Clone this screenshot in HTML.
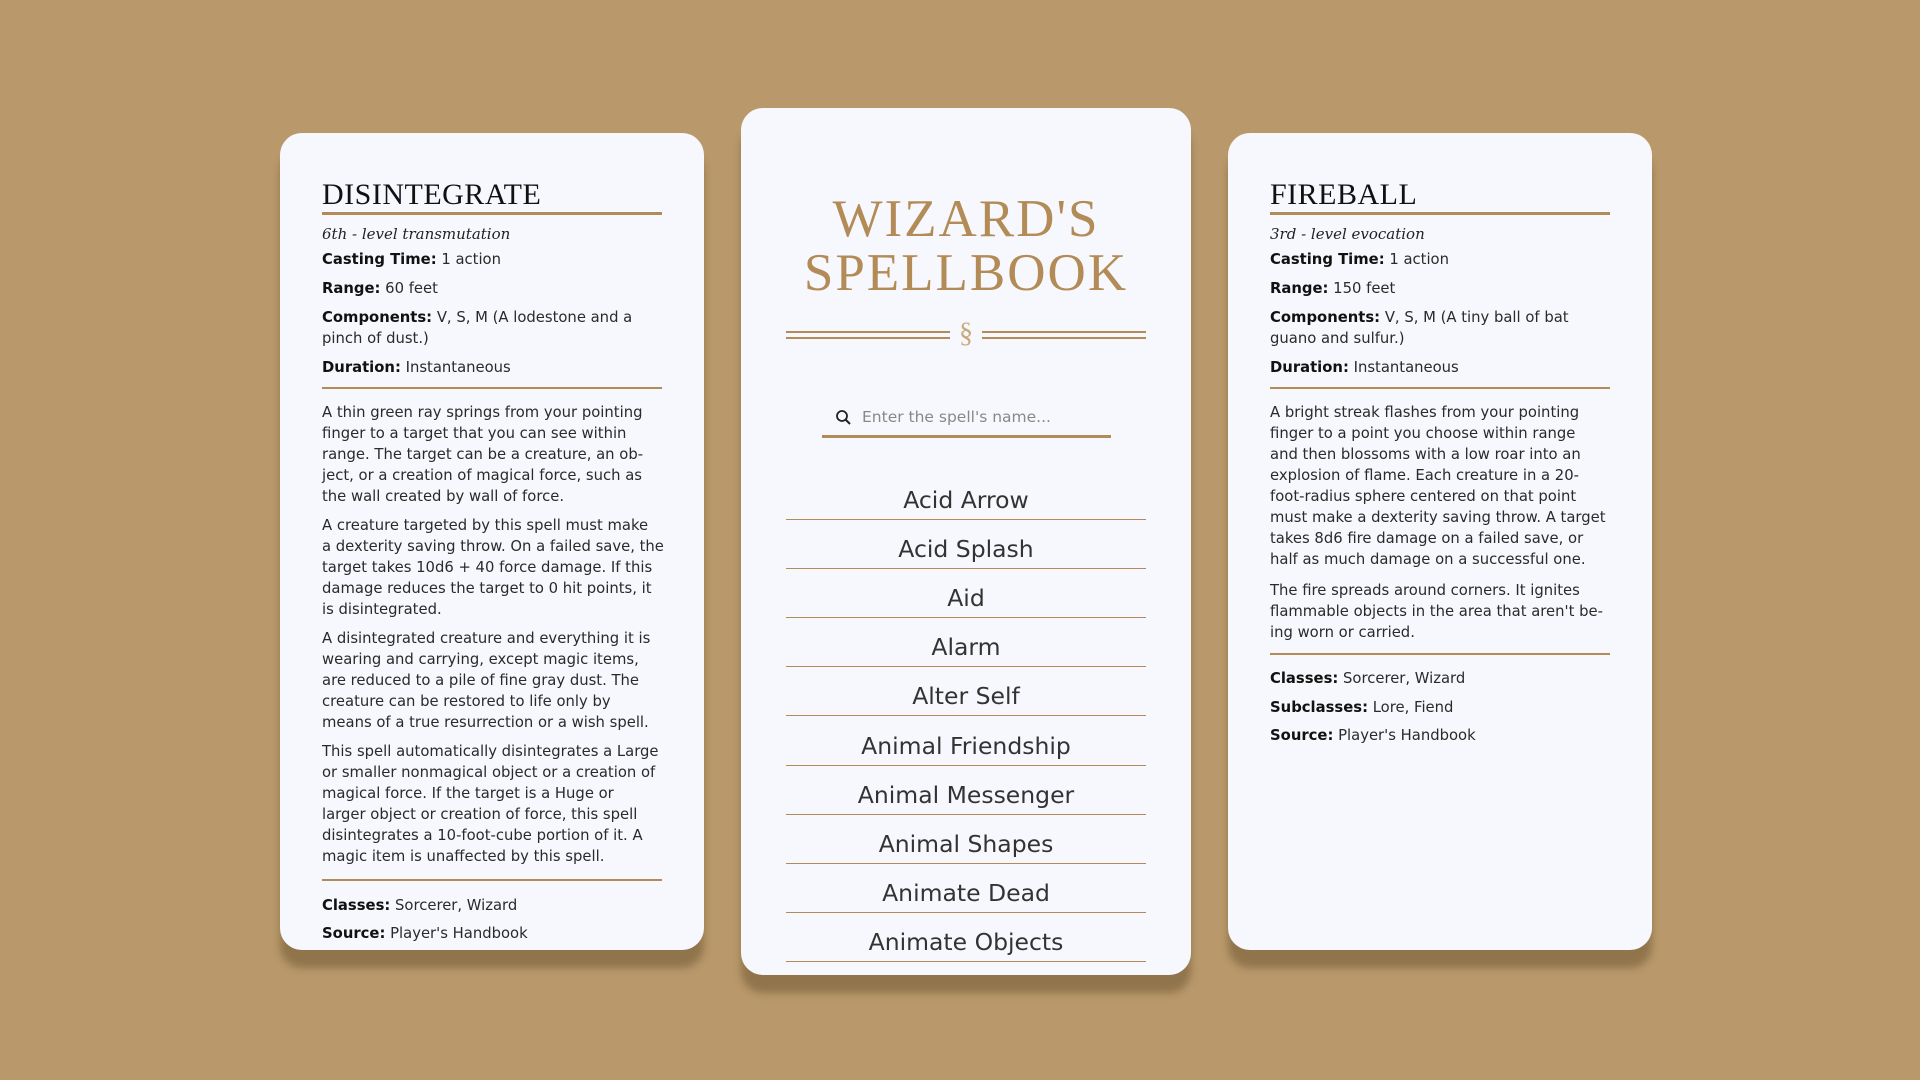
<!DOCTYPE html>
<html><head><meta charset="utf-8"><style>
body{margin:0;width:1920px;height:1080px;background:#b9996b;position:relative;overflow:hidden;font-family:"DejaVu Sans","Liberation Sans",sans-serif;color:#222;}
.card{position:absolute;background:#f7f8fd;border-radius:22px;box-shadow:0 18px 8px rgba(70,50,20,.35);}
.t{position:absolute;white-space:nowrap;font-size:14.8px;line-height:21px;color:#2a2a2a;}
.t b{color:#111;}
.h{position:absolute;font-family:"Liberation Serif",serif;font-size:30px;letter-spacing:0.5px;color:#111;line-height:34px;}
.sub{position:absolute;font-family:"DejaVu Serif","Liberation Serif",serif;font-style:italic;font-size:15px;color:#222;}
.hr{position:absolute;height:2px;background:#b38b57;}
.item{position:absolute;left:45px;width:360px;text-align:center;font-size:23.5px;color:#333;height:30px;line-height:30px;}
.line{position:absolute;left:45px;width:360px;height:1px;background:#b38b57;}
</style></head><body>

<div class="card" style="left:280px;top:133px;width:424px;height:817px;">
<div class="h" style="left:42px;top:45px;">DISINTEGRATE</div>
<div class="hr" style="left:42px;top:79px;width:340px;height:3px;"></div>
<div class="sub" style="left:42px;top:92px;">6th - level transmutation</div>
<div class="t" style="left:42px;top:116px;"><b>Casting Time:</b> 1 action</div>
<div class="t" style="left:42px;top:145px;"><b>Range:</b> 60 feet</div>
<div class="t" style="left:42px;top:174px;"><b>Components:</b> V, S, M (A lodestone and a<br>pinch of dust.)</div>
<div class="t" style="left:42px;top:224px;"><b>Duration:</b> Instantaneous</div>
<div class="hr" style="left:42px;top:254px;width:340px;"></div>
<div class="t" style="left:42px;top:269px;">A thin green ray springs from your pointing<br>finger to a target that you can see within<br>range. The target can be a creature, an ob-<br>ject, or a creation of magical force, such as<br>the wall created by wall of force.</div>
<div class="t" style="left:42px;top:382px;">A creature targeted by this spell must make<br>a dexterity saving throw. On a failed save, the<br>target takes 10d6 + 40 force damage. If this<br>damage reduces the target to 0 hit points, it<br>is disintegrated.</div>
<div class="t" style="left:42px;top:495px;">A disintegrated creature and everything it is<br>wearing and carrying, except magic items,<br>are reduced to a pile of fine gray dust. The<br>creature can be restored to life only by<br>means of a true resurrection or a wish spell.</div>
<div class="t" style="left:42px;top:608px;">This spell automatically disintegrates a Large<br>or smaller nonmagical object or a creation of<br>magical force. If the target is a Huge or<br>larger object or creation of force, this spell<br>disintegrates a 10-foot-cube portion of it. A<br>magic item is unaffected by this spell.</div>
<div class="hr" style="left:42px;top:746px;width:340px;"></div>
<div class="t" style="left:42px;top:762px;"><b>Classes:</b> Sorcerer, Wizard</div>
<div class="t" style="left:42px;top:790px;"><b>Source:</b> Player's Handbook</div>
</div>

<div class="card" style="left:741px;top:108px;width:450px;height:867px;">
<div style="position:absolute;left:0;width:450px;top:84px;text-align:center;font-family:'Liberation Serif',serif;font-size:53px;line-height:54px;letter-spacing:2px;color:#b38b57;">WIZARD'S<br>SPELLBOOK</div>
<div style="position:absolute;left:45px;top:223px;width:164px;height:2px;background:#b38b57;"></div>
<div style="position:absolute;left:45px;top:229px;width:164px;height:2px;background:#b38b57;"></div>
<div style="position:absolute;left:241px;top:223px;width:164px;height:2px;background:#b38b57;"></div>
<div style="position:absolute;left:241px;top:229px;width:164px;height:2px;background:#b38b57;"></div>
<div style="position:absolute;left:205px;width:40px;top:210px;text-align:center;font-family:'Liberation Serif',serif;font-size:28px;color:#c9a87a;">§</div>
<svg style="position:absolute;left:94px;top:301px" width="18" height="18" viewBox="0 0 18 18"><circle cx="7" cy="7" r="5" fill="none" stroke="#222" stroke-width="1.8"/><path d="M10.5 10.5 L15 15" stroke="#222" stroke-width="2"/></svg>
<div style="position:absolute;left:121px;top:300px;font-size:15.5px;color:#888;">Enter the spell's name...</div>
<div style="position:absolute;left:81px;top:327px;width:289px;height:3px;background:#b38b57;"></div>
<div class="item" style="top:377px;">Acid Arrow</div><div class="line" style="top:411px;"></div>
<div class="item" style="top:426px;">Acid Splash</div><div class="line" style="top:460px;"></div>
<div class="item" style="top:475px;">Aid</div><div class="line" style="top:509px;"></div>
<div class="item" style="top:524px;">Alarm</div><div class="line" style="top:558px;"></div>
<div class="item" style="top:573px;">Alter Self</div><div class="line" style="top:607px;"></div>
<div class="item" style="top:623px;">Animal Friendship</div><div class="line" style="top:657px;"></div>
<div class="item" style="top:672px;">Animal Messenger</div><div class="line" style="top:706px;"></div>
<div class="item" style="top:721px;">Animal Shapes</div><div class="line" style="top:755px;"></div>
<div class="item" style="top:770px;">Animate Dead</div><div class="line" style="top:804px;"></div>
<div class="item" style="top:819px;">Animate Objects</div><div class="line" style="top:853px;"></div>
</div>

<div class="card" style="left:1228px;top:133px;width:424px;height:817px;">
<div class="h" style="left:42px;top:45px;">FIREBALL</div>
<div class="hr" style="left:42px;top:79px;width:340px;height:3px;"></div>
<div class="sub" style="left:42px;top:92px;">3rd - level evocation</div>
<div class="t" style="left:42px;top:116px;"><b>Casting Time:</b> 1 action</div>
<div class="t" style="left:42px;top:145px;"><b>Range:</b> 150 feet</div>
<div class="t" style="left:42px;top:174px;"><b>Components:</b> V, S, M (A tiny ball of bat<br>guano and sulfur.)</div>
<div class="t" style="left:42px;top:224px;"><b>Duration:</b> Instantaneous</div>
<div class="hr" style="left:42px;top:254px;width:340px;"></div>
<div class="t" style="left:42px;top:269px;">A bright streak flashes from your pointing<br>finger to a point you choose within range<br>and then blossoms with a low roar into an<br>explosion of flame. Each creature in a 20-<br>foot-radius sphere centered on that point<br>must make a dexterity saving throw. A target<br>takes 8d6 fire damage on a failed save, or<br>half as much damage on a successful one.</div>
<div class="t" style="left:42px;top:447px;">The fire spreads around corners. It ignites<br>flammable objects in the area that aren't be-<br>ing worn or carried.</div>
<div class="hr" style="left:42px;top:520px;width:340px;"></div>
<div class="t" style="left:42px;top:535px;"><b>Classes:</b> Sorcerer, Wizard</div>
<div class="t" style="left:42px;top:564px;"><b>Subclasses:</b> Lore, Fiend</div>
<div class="t" style="left:42px;top:592px;"><b>Source:</b> Player's Handbook</div>
</div>
</body></html>
